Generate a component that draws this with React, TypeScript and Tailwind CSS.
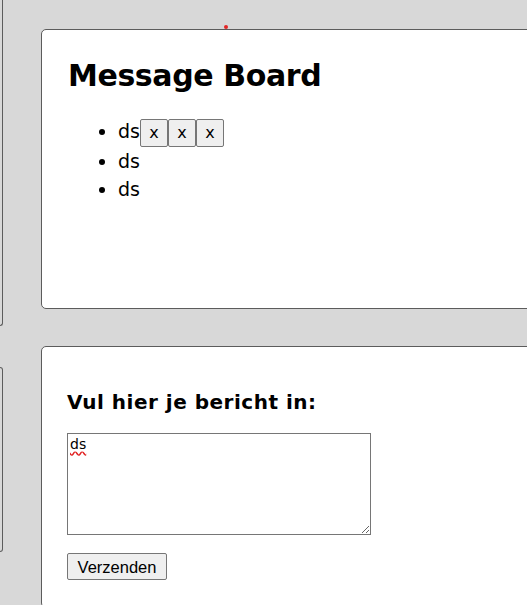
import { useState } from 'react';

// Message board: lijst met berichten + formulier om een nieuw bericht te plaatsen.
export default function App() {
  const [messages] = useState<string[]>(['ds', 'ds', 'ds']);
  const [draft, setDraft] = useState('ds');

  return (
    <div className="relative flex min-h-screen gap-[38px] overflow-hidden bg-[#d8d8d8] font-['DejaVu_Sans',sans-serif] text-black">
      {/* side panels, mostly off-screen */}
      <div className="flex w-[3px] shrink-0 flex-col gap-[41px]">
        <div className="h-[326px] rounded-br-[5px] border-r border-b border-[#5c5c5c]" />
        <div className="h-[185px] rounded-r-[5px] border-y border-r border-[#5c5c5c]" />
      </div>

      <div className="flex w-[600px] shrink-0 flex-col gap-[37px] pt-[29px]">
        <section className="h-[280px] rounded-[5px] border border-[#5c5c5c] bg-white px-[26px] pt-[27px]">
          <h1 className="m-0 text-[30px] leading-[37px] font-bold tracking-[-0.4px]">Message Board</h1>
          <ul className="mt-[23px] list-disc pl-[50px] text-[19px] leading-[28px]">
            {messages.map((m, i) => (
              <li key={i}>
                {m}
                {i === 0 && (
                  <>
                    {[0, 1, 2].map((b) => (
                      <button
                        key={b}
                        type="button"
                        className="h-[28px] w-[28px] rounded-[2px] border border-[#767676] bg-[#efefef] align-middle text-[16px] leading-[26px]"
                      >
                        x
                      </button>
                    ))}
                  </>
                )}
              </li>
            ))}
          </ul>
        </section>

        <section className="h-[262px] rounded-[5px] border border-[#5c5c5c] bg-white px-[25px] pt-[42px]">
          <h3 className="m-0 text-[20px] leading-[26px] font-bold tracking-[0.5px]">Vul hier je bericht in:</h3>
          <textarea
            value={draft}
            spellCheck
            onChange={(e) => setDraft(e.target.value)}
            className="mt-[18px] block h-[102px] w-[304px] border border-[#767676] px-[2px] py-[2px] text-[14px] leading-[17px] underline decoration-[#e02020] decoration-wavy underline-offset-[2px]"
          />
          <button
            type="button"
            className="mt-[18px] block h-[27px] w-[100px] rounded-[2px] border border-[#767676] bg-[#efefef] font-['Liberation_Sans',sans-serif] text-[16.5px] leading-[18px]"
          >
            Verzenden
          </button>
        </section>
      </div>

      <span className="absolute top-[25px] left-[224px] h-[4px] w-[4px] rounded-full bg-[#e32626]" />
    </div>
  );
}
